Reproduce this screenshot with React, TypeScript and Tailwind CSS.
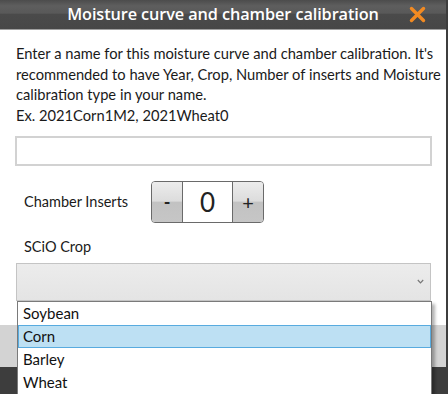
import React from 'react';

const crops = ['Soybean', 'Corn', 'Barley', 'Wheat'];

const intro = [
  "Enter a name for this moisture curve and chamber calibration. It's",
  'recommended to have Year, Crop, Number of inserts and Moisture',
  'calibration type in your name.',
  'Ex. 2021Corn1M2, 2021Wheat0',
];

const App: React.FC = () => {
  return (
    <div className="relative w-[448px] h-[394px] overflow-hidden bg-[#3d3d3d] font-['Lato',sans-serif]">
      <div className="w-[446px] bg-white">
        <div className="relative h-[30px] flex items-center justify-center border-b border-[#a0a0a0] bg-[linear-gradient(to_bottom,#4c4c4c_0%,#5e5e5e_20%,#595959_45%,#4a4a4a_50%,#474747_100%)]">
          <span className="text-white text-[16.3px] font-semibold font-['Open_Sans',sans-serif] tracking-[-0.1px]">
            Moisture curve and chamber calibration
          </span>
          <svg className="absolute right-[20px] top-[6px]" width="17" height="17" viewBox="0 0 17 17">
            <path d="M2.5 2.5 L14.5 14.5 M14.5 2.5 L2.5 14.5" stroke="#f28a22" strokeWidth="3.4" strokeLinecap="round" />
          </svg>
        </div>

        <div className="px-[15px] pt-[13px] h-[295px]">
          <div className="pl-[1px] text-[14.7px] leading-[20.5px] text-[#1a1a1a] whitespace-nowrap">
            {intro.map((line) => (
              <div key={line}>{line}</div>
            ))}
          </div>

          <div className="mt-[11px] h-[30px] w-[417px] border-2 border-[#d2d2d2] bg-white" />

          <div className="mt-[15px] flex items-center">
            <span className="w-[136px] pl-[9px] text-[14.5px] text-[#1a1a1a]">Chamber Inserts</span>
            <div className="flex h-[42px] w-[113px] rounded-[4px] border border-[#6a6a6a] overflow-hidden">
              <div className="w-[31px] flex items-center justify-center border-r border-[#6a6a6a] bg-[linear-gradient(to_bottom,#ececec_0%,#dcdcdc_48%,#c2c2c2_50%,#c6c6c6_100%)] text-[18px] font-bold text-[#222]">
                -
              </div>
              <div className="flex-1 flex items-center justify-center bg-white text-[26px] text-[#222]">0</div>
              <div className="w-[31px] flex items-center justify-center border-l border-[#6a6a6a] bg-[linear-gradient(to_bottom,#ececec_0%,#dcdcdc_48%,#c2c2c2_50%,#c6c6c6_100%)] text-[20px] text-[#222]">
                +
              </div>
            </div>
          </div>

          <div className="mt-[13px] pl-[9px] text-[14.5px] text-[#1a1a1a]">SCiO Crop</div>

          <div className="mt-[5px] ml-[1px] h-[38px] w-[415px] flex items-center justify-end pr-[6px] border border-[#c4c4c4] bg-[linear-gradient(to_bottom,#ececec,#e4e4e4)]">
            <svg width="7" height="5" viewBox="0 0 7 5">
              <path d="M0.8 1 L3.5 3.8 L6.2 1" stroke="#777" strokeWidth="1.2" fill="none" />
            </svg>
          </div>
        </div>

        <div className="h-[42px] bg-[#d3d3d3]" />
      </div>

      <div className="absolute left-[17px] top-[301px] w-[415px] bg-white border border-[#7a7a7a] shadow-[3px_3px_3px_rgba(0,0,0,0.3)]">
        {crops.map((crop) => (
          <div
            key={crop}
            className={
              crop === 'Corn'
                ? 'h-[23px] flex items-center px-[4px] text-[15px] text-[#111] bg-[#bde0f3] border border-[#58abdf]'
                : 'h-[23px] flex items-center px-[5px] text-[15px] text-[#111]'
            }
          >
            {crop}
          </div>
        ))}
      </div>
    </div>
  );
};

export default App;
